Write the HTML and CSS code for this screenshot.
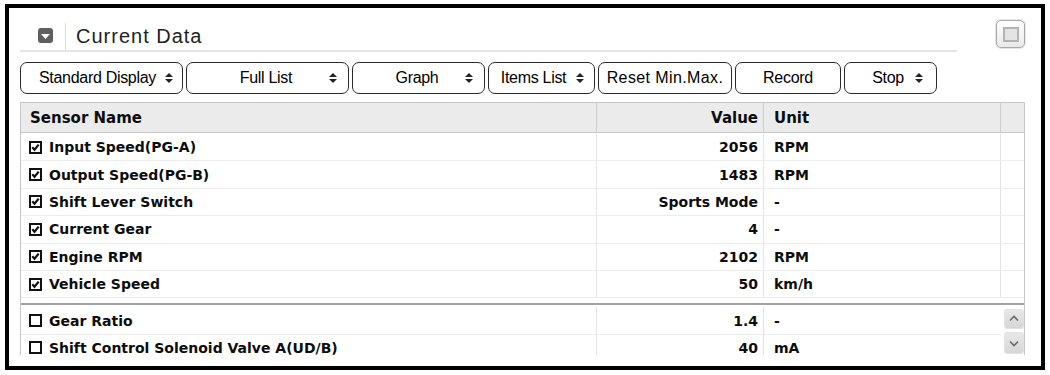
FILE: index.html
```html
<!DOCTYPE html>
<html lang="en">
<head>
  <meta charset="UTF-8" />
  <title>Current Data</title>
  <link rel="stylesheet" href="styles.css">
</head>
<body>

  <svg class="defs" aria-hidden="true">
    <symbol id="chk-on" viewBox="0 0 13 13">
      <rect x="1" y="1" width="11" height="11" fill="#fff" stroke="#111" stroke-width="2" />
      <polyline points="3.3,6.3 5.5,8.8 9.7,3.6" fill="none" stroke="#111" stroke-width="2.2" />
    </symbol>
    <symbol id="chk-off" viewBox="0 0 13 13">
      <rect x="1" y="1" width="11" height="11" fill="#fff" stroke="#111" stroke-width="2" />
    </symbol>
    <symbol id="updown" viewBox="0 0 8 12">
      <polygon points="0,5 4,1 8,5" fill="#222" />
      <polygon points="0,7 4,11 8,7" fill="#222" />
    </symbol>
  </svg>

  <div class="panel">
    <!-- title -->
    <div class="panel-head">
      <div class="title-bar">
        <span class="collapse">
          <svg width="9" height="6" viewBox="0 0 9 6"><polygon points="0,0 9,0 4.5,5" fill="#fff" /></svg>
        </span>
        <span class="sep"></span>
        <h1 class="title">Current Data</h1>
      </div>
      <button class="max-btn" type="button" aria-label="Maximize"><span></span></button>
    </div>

    <!-- toolbar -->
    <div class="toolbar">
      <div class="tb-btn select w-std"><span class="label">Standard Display</span><svg class="updown"><use href="#updown" /></svg></div>
      <div class="tb-btn select w-full"><span class="label">Full List</span><svg class="updown"><use href="#updown" /></svg></div>
      <div class="tb-btn select w-graph"><span class="label">Graph</span><svg class="updown"><use href="#updown" /></svg></div>
      <div class="tb-btn select w-items"><span class="label">Items List</span><svg class="updown"><use href="#updown" /></svg></div>
      <div class="tb-btn w-reset"><span class="label">Reset Min.Max.</span></div>
      <div class="tb-btn w-record"><span class="label">Record</span></div>
      <div class="tb-btn select w-stop"><span class="label">Stop</span><svg class="updown"><use href="#updown" /></svg></div>
    </div>

    <!-- sensor table -->
    <div class="sheet">
      <div class="row head">
        <div class="cell name">Sensor Name</div>
        <div class="cell value">Value</div>
        <div class="cell unit">Unit</div>
        <div class="cell"></div>
      </div>

      <div class="frozen">
        <div class="row">
          <div class="cell name"><svg class="chk"><use href="#chk-on" /></svg>Input Speed(PG-A)</div>
          <div class="cell value">2056</div>
          <div class="cell unit">RPM</div>
          <div class="cell"></div>
        </div>
        <div class="row">
          <div class="cell name"><svg class="chk"><use href="#chk-on" /></svg>Output Speed(PG-B)</div>
          <div class="cell value">1483</div>
          <div class="cell unit">RPM</div>
          <div class="cell"></div>
        </div>
        <div class="row">
          <div class="cell name"><svg class="chk"><use href="#chk-on" /></svg>Shift Lever Switch</div>
          <div class="cell value">Sports Mode</div>
          <div class="cell unit">-</div>
          <div class="cell"></div>
        </div>
        <div class="row">
          <div class="cell name"><svg class="chk"><use href="#chk-on" /></svg>Current Gear</div>
          <div class="cell value">4</div>
          <div class="cell unit">-</div>
          <div class="cell"></div>
        </div>
        <div class="row">
          <div class="cell name"><svg class="chk"><use href="#chk-on" /></svg>Engine RPM</div>
          <div class="cell value">2102</div>
          <div class="cell unit">RPM</div>
          <div class="cell"></div>
        </div>
        <div class="row">
          <div class="cell name"><svg class="chk"><use href="#chk-on" /></svg>Vehicle Speed</div>
          <div class="cell value">50</div>
          <div class="cell unit">km/h</div>
          <div class="cell"></div>
        </div>
      </div>

      <div class="scroll-part">
        <div class="rows">
          <div class="row">
            <div class="cell name"><svg class="chk"><use href="#chk-off" /></svg>Gear Ratio</div>
            <div class="cell value">1.4</div>
            <div class="cell unit">-</div>
          </div>
          <div class="row">
            <div class="cell name"><svg class="chk"><use href="#chk-off" /></svg>Shift Control Solenoid Valve A(UD/B)</div>
            <div class="cell value">40</div>
            <div class="cell unit">mA</div>
          </div>
        </div>
        <div class="vscroll">
          <span class="sb-btn up"><svg width="18" height="18" viewBox="0 0 18 18"><polyline points="5,10.5 9,6.5 13,10.5" fill="none" stroke="#6a6a6a" stroke-width="1.6" /></svg></span>
          <span class="sb-btn down"><svg width="18" height="18" viewBox="0 0 18 18"><polyline points="5,7.5 9,11.5 13,7.5" fill="none" stroke="#6a6a6a" stroke-width="1.6" /></svg></span>
        </div>
      </div>
    </div>
  </div>

</body>
</html>
```

FILE: styles.css
```css
* {
  box-sizing: border-box;
}

body {
  margin: 0;
  background: #fff;
  color: #111;
  font-family: "Liberation Sans", Arial, sans-serif;
}

.defs {
  position: absolute;
  width: 0;
  height: 0;
}

.panel {
  margin: 4px 0 0 5px;
  width: 1040px;
  height: 366px;
  border: 4px solid #000;
  padding: 0 16px 0 11px;
  overflow: hidden;
}

/* Title row */
.panel-head {
  display: flex;
  align-items: flex-start;
}

.title-bar {
  width: 937px;
  height: 44px;
  padding-top: 15px;
  border-bottom: 2px solid #e6e6e6;
  display: flex;
  align-items: stretch;
}

.collapse {
  width: 15px;
  height: 15px;
  margin-left: 18px;
  margin-top: 5px;
  background: #5f5f5f;
  border-radius: 3px;
  display: flex;
  align-items: center;
  justify-content: center;
  padding-top: 2px;
}

.sep {
  width: 1px;
  background: #dcdcdc;
  margin: 0 10px 0 12px;
}

.title {
  margin: 0;
  font-size: 20px;
  font-weight: normal;
  letter-spacing: 1px;
  line-height: 27px;
  color: #222;
}

.max-btn {
  margin: 12px 0 0 auto;
  width: 29px;
  height: 28px;
  padding: 0;
  border: 1px solid #a9a9a9;
  border-radius: 5px;
  background: linear-gradient(#ffffff, #e9e9e9);
  box-shadow: 0 0 0 1px #e6e6e6;
  display: flex;
  align-items: center;
  justify-content: center;
}

.max-btn span {
  width: 16px;
  height: 15px;
  border: 2px solid #b3b3b3;
  background: #e4e4e4;
}

/* Toolbar */
.toolbar {
  display: flex;
  gap: 3px;
  margin-top: 10px;
}

.tb-btn {
  height: 32px;
  border: 1px solid #2a2a2a;
  border-radius: 7px;
  background: #fff;
  display: flex;
  align-items: center;
  padding: 0 6px;
  font-size: 16px;
  letter-spacing: -0.3px;
  color: #000;
}

.tb-btn .label {
  flex: 1;
  text-align: center;
  white-space: nowrap;
}

.tb-btn.select {
  padding: 0 11px 0 20px;
}

.updown {
  width: 8px;
  height: 12px;
  margin-left: 4px;
  flex: none;
}

.w-std { width: 163px; }
.w-full { width: 163px; }
.w-graph { width: 133px; }
.w-items { width: 107px; }
.w-reset { width: 134px; }
.w-record { width: 106px; }
.w-stop { width: 93px; }

.tb-btn.w-std { padding-left: 13px; padding-right: 9px; }
.tb-btn.w-items { padding-left: 6px; padding-right: 10px; }
.tb-btn.w-stop { padding-right: 13px; }
.w-reset .label { letter-spacing: 0.4px; }

/* Sensor table */
.sheet {
  margin-top: 8px;
  border: 1px solid #c6c6c6;
  border-bottom: none;
  font-family: "DejaVu Sans", Verdana, sans-serif;
  font-weight: bold;
  font-size: 14px;
  color: #0d0d0d;
}

.row {
  display: grid;
  grid-template-columns: 576px 167px 237px 1fr;
  height: 27.4px;
  border-bottom: 1px solid #ededed;
}

.cell {
  display: flex;
  align-items: center;
  white-space: nowrap;
  overflow: hidden;
  border-right: 1px solid #e3e3e3;
}

.cell:last-child {
  border-right: none;
}

.cell.name {
  padding-left: 8px;
}

.cell.value {
  justify-content: flex-end;
  padding-right: 5px;
}

.cell.unit {
  padding-left: 10px;
}

.row.head {
  height: 30px;
  background: #ebebeb;
  border-bottom: 1px solid #c9c9c9;
  font-size: 15px;
}

.row.head .cell {
  border-right-color: #cdcdcd;
}

.row.head .cell.name {
  padding-left: 9px;
}

.chk {
  width: 13px;
  height: 13px;
  margin-right: 7px;
  flex: none;
}

.frozen {
  padding: 1px 0 5px;
  border-bottom: 2px solid #a2a2a2;
}

.scroll-part {
  margin-top: 2px;
  height: 48px;
  display: flex;
  overflow: hidden;
}

.rows {
  width: 980px;
}

.rows .row {
  grid-template-columns: 576px 167px 237px;
}

.rows .cell.unit {
  border-right: none;
}

.vscroll {
  flex: 1;
  padding: 3px 0 0 4px;
  display: flex;
  flex-direction: column;
  gap: 5px;
}

.sb-btn {
  width: 18px;
  height: 18px;
  border-radius: 2px;
  background: linear-gradient(#e8e8e8, #d6d6d6);
  box-shadow: 0 0 0 1px #e2e2e2;
  display: flex;
}

.sb-btn.down {
  height: 20px;
  align-items: center;
}
```
